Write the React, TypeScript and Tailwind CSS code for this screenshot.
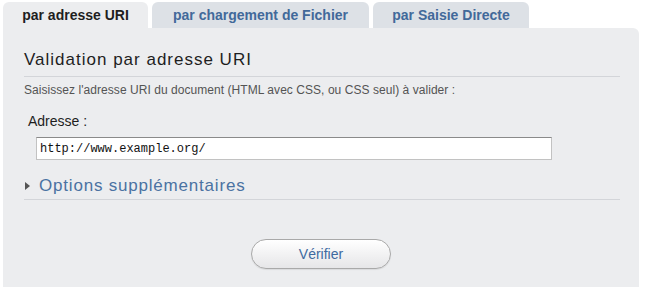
import { useState } from "react";

const tabs = [
  { label: "par adresse URI", width: "w-[145px]" },
  { label: "par chargement de Fichier", width: "w-[217px]" },
  { label: "par Saisie Directe", width: "w-[156px]" },
];

export default function App() {
  const [active] = useState(0);
  const [uri, setUri] = useState("http://www.example.org/");

  return (
    <div className="w-[645px] h-[291px] bg-white pl-[3px] pt-[2px] font-['Liberation_Sans',Arial,sans-serif] overflow-hidden">
      <div className="flex gap-[4px]">
        {tabs.map((tab, i) => (
          <div
            key={i}
            className={
              "h-[26px] pt-[1px] rounded-t-[6px] flex items-center justify-center text-[14px] font-bold " +
              tab.width +
              (i === active
                ? " bg-[#ecedef] text-[#1e1e1e]"
                : " bg-[#dde1e6] text-[#42699a]")
            }
          >
            {tab.label}
          </div>
        ))}
      </div>

      <div className="w-[636px] h-[259px] bg-[#ecedef] rounded-tr-[6px] pl-[21px] pr-[19px] pt-[22px]">
        <h2 className="text-[17px] leading-[20px] tracking-[1px] text-[#1e1e1e] pb-[6px] border-b border-[#d3d5d9]">
          Validation par adresse URI
        </h2>
        <p className="mt-[6px] text-[12px] leading-[14px] tracking-[0.05px] text-[#545454]">
          Saisissez l'adresse URI du document (HTML avec CSS, ou CSS seul) à valider :
        </p>

        <label className="block mt-[16px] ml-[4px] text-[14px] leading-[16px] text-[#1e1e1e]">
          Adresse :
        </label>
        <input
          value={uri}
          onChange={(e) => setUri(e.target.value)}
          className="block mt-[8px] ml-[12px] w-[516px] h-[23px] bg-white px-[3px] border border-[#c2c2c2] border-t-[#8a8a8a] text-[12px] text-[#111] font-['Liberation_Mono','DejaVu_Sans_Mono',monospace] outline-none"
        />

        <div className="mt-[16px] pb-[3px] border-b border-[#d3d5d9] flex items-center gap-[9px]">
          <svg width="5" height="8" viewBox="0 0 5 8" className="ml-[1px]">
            <path d="M0 0 L5 4 L0 8 Z" fill="#555" />
          </svg>
          <span className="text-[17px] leading-[20px] tracking-[0.8px] text-[#4a72a2]">
            Options supplémentaires
          </span>
        </div>

        <div className="flex justify-center mt-[39px] pr-[2px]">
          <button className="w-[140px] h-[30px] rounded-full border border-[#a9a9a9] bg-gradient-to-b from-white to-[#e6e6e8] text-[14px] text-[#3e6aa0] shadow-[0_1px_1px_rgba(0,0,0,0.08)]">
            Vérifier
          </button>
        </div>
      </div>
    </div>
  );
}
